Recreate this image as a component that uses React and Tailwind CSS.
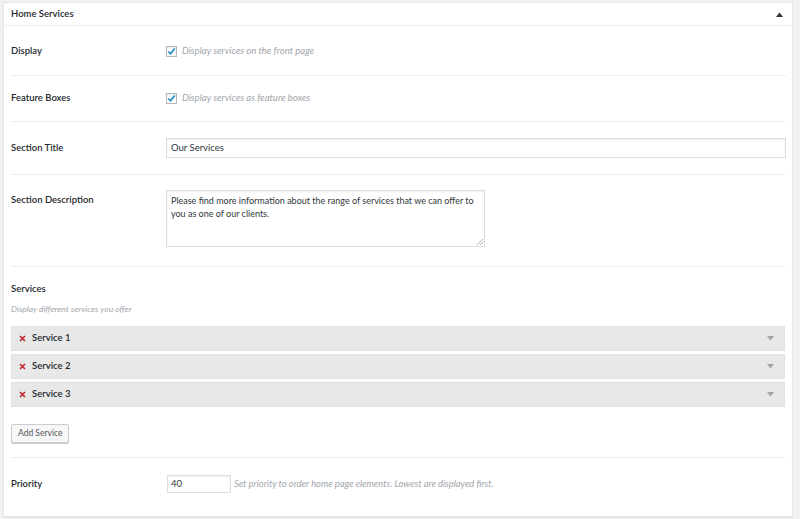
import React from "react";

const font = { fontFamily: "Lato, 'Open Sans', sans-serif" };

function Check() {
  return (
    <span className="w-[11px] h-[11px] border border-[#b4b9be] bg-white flex items-center justify-center shadow-[inset_0_1px_2px_rgba(0,0,0,0.1)]">
      <svg width="9" height="9" viewBox="0 0 10 10">
        <path d="M1.5 5.2 L4 7.6 L8.6 1.6" fill="none" stroke="#1e8cbe" strokeWidth="1.8" />
      </svg>
    </span>
  );
}

function ServiceRow({ name }) {
  return (
    <div className="h-[25px] bg-[#e8e8e8] border border-[#e2e2e2] flex items-center justify-between pl-[7px] pr-[10px]">
      <div className="flex items-center gap-[6px]">
        <svg width="7" height="7" viewBox="0 0 7 7">
          <path d="M1 1 L6 6 M6 1 L1 6" stroke="#c0262c" strokeWidth="1.6" />
        </svg>
        <span className="text-[9.5px] font-semibold text-[#23282d]">{name}</span>
      </div>
      <svg width="7" height="5" viewBox="0 0 7 5">
        <path d="M0 0 L7 0 L3.5 4.5 Z" fill="#a0a5aa" />
      </svg>
    </div>
  );
}

export default function App() {
  return (
    <div className="w-[800px] h-[519px] bg-[#f1f1f1] pt-[2px] pl-[3px]" style={font}>
      <div className="w-[790px] h-[515px] bg-white border border-[#e5e5e5] shadow-[0_1px_1px_rgba(0,0,0,0.04)]">
        <div className="h-[23px] border-b border-[#eeeeee] flex items-center justify-between pl-[7px] pr-[9px]">
          <span className="text-[9.5px] font-semibold text-[#23282d]">Home Services</span>
          <svg width="7" height="5" viewBox="0 0 7 5">
            <path d="M0 5 L7 5 L3.5 0.5 Z" fill="#32373c" />
          </svg>
        </div>
        <div className="pl-[7px] pr-[6px]">
          <div className="h-[50px] border-b border-[#eeeeee] flex items-center pt-[2px]">
            <div className="w-[155px] text-[9.5px] font-semibold text-[#23282d]">Display</div>
            <div className="flex items-center gap-[5px]">
              <Check />
              <span className="text-[9.5px] italic text-[#a0a5aa]">Display services on the front page</span>
            </div>
          </div>
          <div className="h-[46px] border-b border-[#eeeeee] flex items-center">
            <div className="w-[155px] text-[9.5px] font-semibold text-[#23282d]">Feature Boxes</div>
            <div className="flex items-center gap-[5px]">
              <Check />
              <span className="text-[9.5px] italic text-[#a0a5aa]">Display services as feature boxes</span>
            </div>
          </div>
          <div className="h-[53px] border-b border-[#eeeeee] flex items-center">
            <div className="w-[155px] text-[9.5px] font-semibold text-[#23282d]">Section Title</div>
            <div className="flex-1 h-[20px] border border-[#dddddd] shadow-[inset_0_1px_2px_rgba(0,0,0,0.07)] flex items-center px-[4px] text-[9.5px] text-[#32373c]">
              Our Services
            </div>
          </div>
          <div className="h-[92px] border-b border-[#eeeeee] flex items-start pt-[15px]">
            <div className="w-[155px] text-[9.5px] font-semibold text-[#23282d] mt-[3px]">Section Description</div>
            <div className="relative w-[319px] h-[57px] border border-[#dddddd] shadow-[inset_0_1px_2px_rgba(0,0,0,0.07)] pl-[4px] pr-[2px] pt-[3px] text-[9px] leading-[13px] text-[#32373c]">
              Please find more information about the range of services that we can offer to you as one of our clients.
              <svg className="absolute right-[1px] bottom-[1px]" width="6" height="6" viewBox="0 0 6 6">
                <path d="M6 0 L0 6 M6 3 L3 6" stroke="#9a9a9a" strokeWidth="0.8" />
              </svg>
            </div>
          </div>
          <div className="h-[191px] border-b border-[#eeeeee] flex flex-col pt-[16px]">
            <div className="text-[9.5px] font-semibold text-[#23282d] leading-[12px]">Services</div>
            <div className="text-[8.5px] italic text-[#a0a5aa] mt-[9px] leading-[11px]">Display different services you offer</div>
            <div className="flex flex-col gap-[3px] mt-[11px] mr-[1px]">
              <ServiceRow name="Service 1" />
              <ServiceRow name="Service 2" />
              <ServiceRow name="Service 3" />
            </div>
            <div className="mt-[11px]">
              <span className="inline-flex items-center h-[19px] px-[6px] border border-[#cccccc] bg-[#f7f7f7] rounded-[2px] shadow-[0_1px_0_#cccccc] text-[8.5px] text-[#555555]">
                Add Service
              </span>
            </div>
          </div>
          <div className="h-[52px] flex items-center">
            <div className="w-[156px] text-[9.5px] font-semibold text-[#23282d]">Priority</div>
            <div className="w-[64px] h-[18px] border border-[#dddddd] shadow-[inset_0_1px_2px_rgba(0,0,0,0.07)] flex items-center px-[3px] text-[9.5px] text-[#32373c]">
              40
            </div>
            <span className="ml-[3px] text-[9.3px] italic text-[#a0a5aa]">Set priority to order home page elements. Lowest are displayed first.</span>
          </div>
        </div>
      </div>
    </div>
  );
}
